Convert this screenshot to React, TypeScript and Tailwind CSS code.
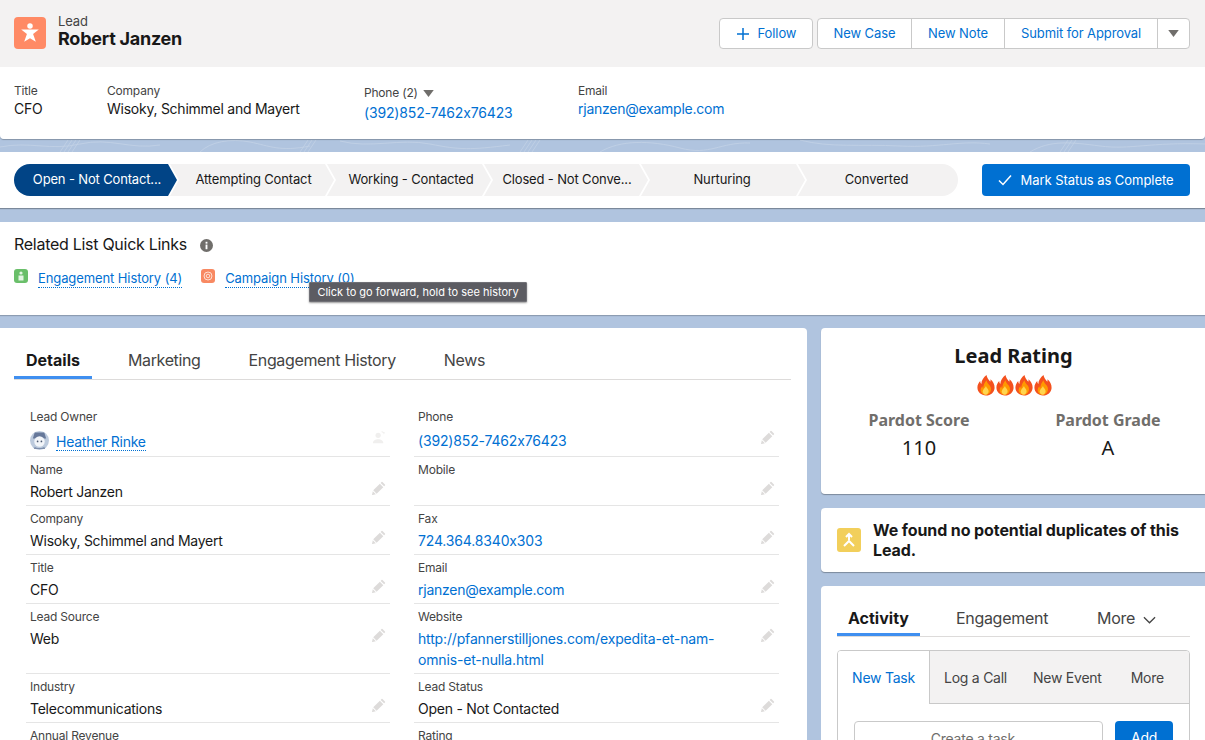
import React from "react";

const sans = "font-['Inter','Liberation_Sans',sans-serif]";

function Pencil() {
  return (
    <svg viewBox="0 0 16 16" className="w-[14px] h-[14px] shrink-0 fill-[#dddbda]">
      <path d="M12 1.2 14.8 4a.8.8 0 0 1 0 1.1l-1 1L9.9 2.2l1-1a.8.8 0 0 1 1.1 0ZM9 3.1 12.9 7l-7.6 7.6-3.9-3.900L9 3.100ZM.9 11.600l3.500 3.500-3.700 .9a.5.5 0 0 1-.6-.6l.8-3.800Z" />
    </svg>
  );
}

function Flame() {
  return (
    <svg viewBox="0 0 20 22" className="w-[20px] h-[21px]">
      <path d="M10.500 0c.6 3.400 2.300 4.800 4 7 .3-.9.3-1.600.2-2.500 2.800 2.400 4.500 5.600 4.300 9C18.700 18 15 21.500 10 21.500S1 18 1 13.200c0-2.800 1.300-5 3-6.800 0 1.300.3 2.300 1.100 3C5.200 5.600 7.600 2.200 10.500 0Z" fill="#f4511e" />
      <path d="M10.500 5.500c.3 2.500 2 3.700 3.600 5.800 1.600 2.200 1.500 5.200-.1 7.400-1 1.300-2.500 2.300-4 2.300-3 0-5.600-2.100-5.600-5.200 0-1.700.8-3 1.900-4 0 1 .3 1.600.8 2 .1-3 1.700-6.300 3.400-8.300Z" fill="#ff9800" />
      <path d="M10 11.500c.3 1.500 1.400 2.400 2.200 3.600 1 1.500.6 3.500-.8 4.900-.5.400-1 .7-1.600.7-1.900 0-3.300-1.400-3.300-3.300 0-2.200 2.500-3.700 3.500-5.900Z" fill="#ffd54f" />
    </svg>
  );
}

function Topo() {
  return (
    <svg className="w-full h-full" viewBox="0 0 1205 13" preserveAspectRatio="none" fill="none" stroke="#c3d2e6" strokeWidth="0.8">
      <path d="M0 8c30-6 50 4 80-3s50 6 80 1M200 13c10-10 30-14 50-10s30 10 60 4M340 2c30 8 60-3 90 3s40 6 80 1M600 13c20-12 50-12 80-4s40-6 70-5M800 1c30 8 60 4 100 6s60-6 90-2M1030 13c20-12 40-10 70-6s50-4 105-2" />
      <path d="M60 13 68 1M64 13 72 1M68 13 76 1M72 13 80 1M300 13 308 1M304 13 312 1M308 13 316 1M520 13 528 1M524 13 532 1M528 13 536 1M532 13 540 1M1060 13 1068 1M1064 13 1072 1M1068 13 1076 1" />
    </svg>
  );
}

function Step({ label, i }: { label: string; i: number }) {
  const first = "w-[163px] bg-[#014486] text-white rounded-l-full pl-[3px] [clip-path:polygon(0_0,154px_0,163px_50%,154px_100%,0_100%)]";
  const rest = "w-[164px] -ml-[7px] bg-[#f3f2f2] text-[#181818] [clip-path:polygon(0_0,155px_0,164px_50%,155px_100%,0_100%,9px_50%)]";
  const pad = i === 4 ? "pr-[2px]" : i === 3 ? "pl-[2px]" : i === 2 ? "pl-[4px]" : "pl-[3px]";
  return (
    <div className={`h-8 flex items-center justify-center text-[13px] tracking-[-0.15px] whitespace-nowrap ${i === 0 ? first : rest + " " + pad}`}>
      {label}
    </div>
  );
}

function Field({ label, value, link, tall, owner, first }: { label: string; value?: React.ReactNode; link?: boolean; tall?: boolean; owner?: boolean; first?: boolean }) {
  return (
    <div className={`relative border-b border-[#e5e5e5] px-1 ${first ? "" : "pt-[4px]"} ${tall ? "h-[70px]" : "h-[49px]"}`}>
      <div className="text-[12px] leading-[18px] text-[#444444] tracking-[-0.2px]">{label}</div>
      <div className={`${first ? "mt-[4px]" : "mt-[2px]"} text-[14px] leading-[21px] ${link ? "text-[#0070d2]" : "text-[#181818]"}`}>{value}</div>
      <div className={`absolute right-[4px] ${first ? "top-[22px]" : "top-[24px]"}`}>
        {owner ? (
          <svg viewBox="0 0 16 16" className="w-[14px] h-[14px] fill-[#f0efee]">
            <circle cx="7" cy="6" r="3" />
            <path d="M1 15c0-3 3-4.500 6-4.500s6 1.500 6 4.500H1ZM11 1l4 2-2 2 .2-1.500L11 2.500Z" />
          </svg>
        ) : (
          <Pencil />
        )}
      </div>
    </div>
  );
}

function Tab({ label, active }: { label: string; active?: boolean }) {
  return (
    <div className={`h-full px-3 flex items-center text-[16px] ${active ? "font-bold tracking-normal text-[#181818] border-b-[3px] border-[#3f8ff0] pt-[1px]" : "text-[#444444] pb-[2px] tracking-[-0.36px]"}`}>
      {label}
    </div>
  );
}

export default function App() {
  return (
    <div className={`relative h-[740px] overflow-hidden bg-[#b0c4df] tracking-[-0.25px] [font-feature-settings:'calt'_0] ${sans}`}>
      {/* Highlights */}
      <div className="rounded-b-[4px] shadow-[0_1px_1px_rgba(0,0,0,0.25)] relative">
        <div className="h-[67px] bg-[#f3f2f2] flex items-start justify-between pl-[14px] pr-[15px]">
          <div className="flex items-start pt-[17px]">
            <div className="w-8 h-8 rounded-[4px] bg-[#ff8a65] flex items-center justify-center">
              <svg viewBox="0 0 20 20" className="w-[22px] h-[22px] fill-white">
                <circle cx="10" cy="3.600" r="2.500" />
                <path d="M2 6.800 18 6.800 12.800 11 15.300 18 10 14.700 4.700 18 7.200 11Z" />
              </svg>
            </div>
            <div className="ml-3 -mt-[6px]">
              <div className="text-[13px] leading-[16px] text-[#444444] pt-[2px] tracking-[-0.1px]">Lead</div>
              <div className="text-[18px] leading-[20px] font-bold text-[#181818]">Robert Janzen</div>
            </div>
          </div>
          <div className="flex items-center gap-1 pt-[18px] text-[13px] text-[#0070d2] tracking-[-0.1px]">
            <div className="h-[31px] w-[94px] flex items-center justify-center gap-[8px] bg-white border border-[#c9c9c9] rounded-[4px]">
              <svg viewBox="0 0 14 14" className="w-[14px] h-[14px] stroke-[#0070d2]" strokeWidth="1.500" fill="none">
                <path d="M7 1v12M1 7h12" />
              </svg>
              Follow
            </div>
            <div className="h-[31px] flex items-stretch bg-white border border-[#c9c9c9] rounded-[4px]">
              <div className="w-[94px] flex items-center justify-center border-r border-[#c9c9c9]">New Case</div>
              <div className="w-[93px] flex items-center justify-center border-r border-[#c9c9c9]">New Note</div>
              <div className="w-[153px] flex items-center justify-center border-r border-[#c9c9c9]">Submit for Approval</div>
              <div className="w-[31px] flex items-center justify-center">
                <svg viewBox="0 0 12 8" className="w-[11px] h-[7px] fill-[#706e6b]">
                  <path d="M0 0h12L6 8Z" />
                </svg>
              </div>
            </div>
          </div>
        </div>
        <div className="h-[72px] bg-white rounded-b-[4px] flex items-start pl-[14px] pt-[15px]">
          <div className="w-[93px]">
            <div className="text-[12px] leading-[18px] text-[#444444] tracking-[-0.2px]">Title</div>
            <div className="text-[14px] leading-[20px] -mt-[1px] text-[#181818]">CFO</div>
          </div>
          <div className="w-[257px]">
            <div className="text-[12px] leading-[18px] text-[#444444] tracking-[-0.2px]">Company</div>
            <div className="text-[14px] leading-[20px] -mt-[1px] text-[#181818]">Wisoky, Schimmel and Mayert</div>
          </div>
          <div className="w-[214px] pt-[2px]">
            <div className="text-[12px] leading-[18px] text-[#444444] tracking-[-0.2px] flex items-center gap-[5px]">
              Phone (2)
              <svg viewBox="0 0 12 8" className="w-[11px] h-[7px] fill-[#706e6b]">
                <path d="M0 0h12L6 8Z" />
              </svg>
            </div>
            <div className="text-[14px] leading-[20px] text-[#0070d2] mt-[1px] tracking-[-0.16px]">(392)852-7462x76423</div>
          </div>
          <div>
            <div className="text-[12px] leading-[18px] text-[#444444] tracking-[-0.2px]">Email</div>
            <div className="text-[14px] leading-[20px] -mt-[1px] text-[#0070d2]">rjanzen@example.com</div>
          </div>
        </div>
      </div>

      <div className="h-[13px]">
        <Topo />
      </div>

      {/* Path */}
      <div className="h-[56px] bg-white flex items-center pl-[14px] pr-[15px] shadow-[0_1px_1px_rgba(0,0,0,0.3)]">
        <div className="w-[944px] flex items-center rounded-r-full overflow-hidden">
          {["Open - Not Contact...", "Attempting Contact", "Working - Contacted", "Closed - Not Conve...", "Nurturing"].map((s, i) => (
            <Step key={s} label={s} i={i} />
          ))}
          <div className="h-8 flex-1 -ml-[7px] bg-[#f3f2f2] text-[#181818] text-[13px] tracking-[-0.05px] flex items-center justify-center pr-[3px] [clip-path:polygon(0_0,100%_0,100%_100%,0_100%,9px_50%)]">
            Converted
          </div>
        </div>
        <div className="ml-auto w-[208px] h-8 rounded-[4px] bg-[#0070d2] text-white text-[13px] tracking-[-0.05px] flex items-center justify-center gap-[8px]">
          <svg viewBox="0 0 14 12" className="w-[14px] h-[12px] stroke-white" fill="none" strokeWidth="1.500">
            <path d="M1 6.500 5 10.500 13 1.500" />
          </svg>
          <span className="pt-[2px]">Mark Status as Complete</span>
        </div>
      </div>

      {/* Quick links */}
      <div className="mt-[14px] h-[93px] bg-white pl-[14px] pt-[12px] shadow-[0_1px_1px_rgba(0,0,0,0.2)]">
        <div className="flex items-center text-[16px] leading-[20px] text-[#181818] tracking-[-0.28px]">
          Related List Quick Links
          <svg viewBox="0 0 14 14" className="ml-[13px] mt-[3px] w-[13px] h-[13px]">
            <circle cx="7" cy="7" r="7" fill="#706e6b" />
            <rect x="6" y="6" width="2" height="5" fill="#fff" />
            <rect x="6" y="3" width="2" height="2" fill="#fff" />
          </svg>
        </div>
        <div className="flex items-start mt-[16px] text-[13px] text-[#0070d2] tracking-[-0.1px]">
          <div className="w-[14px] h-[14px] rounded-[3px] bg-[#6abf6a] flex items-center justify-center mt-[-1px]">
            <svg viewBox="0 0 14 14" className="w-[14px] h-[14px] fill-[#e4f5e4]">
              <circle cx="7" cy="4" r="1.600" />
              <path d="M4.500 6.500h5v5h-5Z" />
            </svg>
          </div>
          <div className="ml-[10px] leading-[17px] border-b border-dotted border-[#0070d2]">Engagement History (4)</div>
          <div className="ml-[19px] w-[14px] h-[14px] rounded-[3px] bg-[#f88962] flex items-center justify-center mt-[-1px]">
            <svg viewBox="0 0 14 14" className="w-[14px] h-[14px] fill-none stroke-[#fde0d4]">
              <circle cx="7" cy="7" r="4" />
              <circle cx="7" cy="7" r="1.800" />
            </svg>
          </div>
          <div className="ml-[10px] leading-[17px] border-b border-dotted border-[#0070d2]">Campaign History (0)</div>
        </div>
      </div>

      {/* Tooltip */}
      <div className="absolute left-[309px] top-[282px] h-[20px] w-[218px] bg-[#5c5c62] border border-[#707076] shadow-[0_1px_2px_rgba(0,0,0,0.4)] rounded-[1px] flex items-center justify-center text-[11px] tracking-normal text-white whitespace-nowrap">
        Click to go forward, hold to see history
      </div>

      {/* Body */}
      <div className="mt-[13px] flex items-start gap-[14px]">
        <div className="w-[807px] h-[500px] bg-white rounded-tr-[4px] pl-[14px] pr-4">
          <div className="h-[52px] border-b border-[#dddbda] flex items-end">
            <div className="flex h-[36px] gap-6">
              <Tab label="Details" active />
              <Tab label="Marketing" />
              <Tab label="Engagement History" />
              <Tab label="News" />
            </div>
          </div>
          <div className="mt-7 ml-3 mr-3 grid grid-cols-[364px_365px] gap-x-6">
            <Field
              first
              owner
              label="Lead Owner"
              link
              value={
                <span className="flex items-center gap-[7px]">
                  <svg viewBox="0 0 20 20" className="w-[19px] h-[19px] -mt-[1px]">
                    <circle cx="10" cy="10" r="10" fill="#bccadd" />
                    <path d="M3 8 5 1.500h10L17 8Z" fill="#66789a" />
                    <circle cx="10" cy="11" r="5.500" fill="#f2f5f9" />
                    <path d="M5 16.500c1.500 2 8.500 2 10 0l1 2.500H4Z" fill="#7f90ad" />
                    <circle cx="8" cy="11" r=".9" fill="#4a5870" />
                    <circle cx="12" cy="11" r=".9" fill="#4a5870" />
                  </svg>
                  <span className="border-b border-dotted border-[#0070d2] leading-[17px] mt-[3px]">Heather Rinke</span>
                </span>
              }
            />
            <Field first label="Phone" link value={<span className="tracking-[-0.16px]">(392)852-7462x76423</span>} />
            <Field label="Name" value="Robert Janzen" />
            <Field label="Mobile" value="" />
            <Field label="Company" value="Wisoky, Schimmel and Mayert" />
            <Field label="Fax" link value={<span className="tracking-[-0.16px]">724.364.8340x303</span>} />
            <Field label="Title" value="CFO" />
            <Field label="Email" link value="rjanzen@example.com" />
            <Field label="Lead Source" value="Web" tall />
            <Field
              label="Website"
              link
              tall
              value={
                <span className="tracking-[-0.16px]">
                  http://pfannerstilljones.com/expedita-et-nam-
                  <br />
                  omnis-et-nulla.html
                </span>
              }
            />
            <Field label="Industry" value="Telecommunications" />
            <Field label="Lead Status" value="Open - Not Contacted" />
            <Field label="Annual Revenue" value="" />
            <Field label="Rating" value="" />
          </div>
        </div>

        <div className="flex-1 flex flex-col gap-[14px] min-w-0">
          <div className="h-[166px] bg-white rounded-l-[4px] shadow-[0_1px_1px_rgba(0,0,0,0.3)] pt-[14px] tracking-normal font-['Noto_Sans',sans-serif]">
            <div className="text-center text-[20px] leading-[28px] font-bold text-[#181818] pl-[1px]">Lead Rating</div>
            <div className="flex justify-center items-center mt-[5px] pl-[2px] -space-x-px">
              <Flame />
              <Flame />
              <Flame />
              <Flame />
            </div>
            <div className="flex mt-[12px]">
              <div className="w-[196px] text-center">
                <div className="text-[16px] leading-[24px] font-bold text-[#706e6b]">Pardot Score</div>
                <div className="text-[20px] leading-[32px] text-[#181818]">110</div>
              </div>
              <div className="w-[182px] text-center">
                <div className="text-[16px] leading-[24px] font-bold text-[#706e6b]">Pardot Grade</div>
                <div className="text-[20px] leading-[32px] text-[#181818]">A</div>
              </div>
            </div>
          </div>

          <div className="h-[64px] bg-white rounded-l-[4px] shadow-[0_1px_1px_rgba(0,0,0,0.3)] flex items-center pl-4">
            <div className="w-6 h-6 rounded-[3px] bg-[#f2cf5b] flex items-center justify-center shrink-0">
              <svg viewBox="0 0 16 16" className="w-4 h-4" fill="none" stroke="#fff" strokeWidth="2">
                <path d="M8 2v6M5 5l3-3 3 3M3 14l5-5 5 5" />
              </svg>
            </div>
            <div className="ml-3 text-[16px] leading-[20px] font-bold text-[#181818] tracking-[-0.1px] w-[316px]">We found no potential duplicates of this Lead.</div>
          </div>

          <div className="h-[200px] bg-white rounded-l-[4px] pl-4 pr-[15px]">
            <div className="h-[51px] mt-0 border-b border-[#dddbda] flex items-end">
              <div className="h-[36px] w-[83px] flex items-center justify-center border-b-[3px] border-[#3f8ff0] pt-[3px] text-[16px] font-bold text-[#181818] tracking-normal">Activity</div>
              <div className="h-[36px] w-[164px] flex items-center justify-center text-[16px] text-[#444444] tracking-[-0.28px]">Engagement</div>
              <div className="h-[36px] flex items-center gap-[8px] ml-[13px] text-[16px] text-[#444444] tracking-[-0.28px]">
                More
                <svg viewBox="0 0 14 14" className="w-[13px] h-[13px] mt-[3px]" fill="none" stroke="#444444" strokeWidth="1.400">
                  <path d="M1 4.500 7 10.500 13 4.500" />
                </svg>
              </div>
            </div>
            <div className="mt-[13px] h-[120px] border border-[#c9c9c9] rounded-t-[4px] overflow-hidden">
              <div className="h-[53px] flex text-[14px] text-[#444444]">
                <div className="w-[92px] bg-white border-r border-[#c9c9c9] flex items-center justify-center text-[#0070d2]">New Task</div>
                <div className="flex-1 bg-[#f3f2f2] border-b border-[#c9c9c9] flex items-center pl-[14px]">
                  <span>Log a Call</span>
                  <span className="ml-[26px]">New Event</span>
                  <span className="ml-[29px]">More</span>
                </div>
              </div>
              <div className="flex mt-[17px] pl-4 text-[14px]">
                <div className="w-[249px] h-9 border border-[#c9c9c9] rounded-[4px] text-center text-[#706e6b] leading-[34px]">Create a task...</div>
                <div className="ml-3 w-[58px] h-9 rounded-[4px] bg-[#0070d2] text-white text-center leading-[34px]">Add</div>
              </div>
            </div>
          </div>
        </div>
      </div>
    </div>
  );
}
